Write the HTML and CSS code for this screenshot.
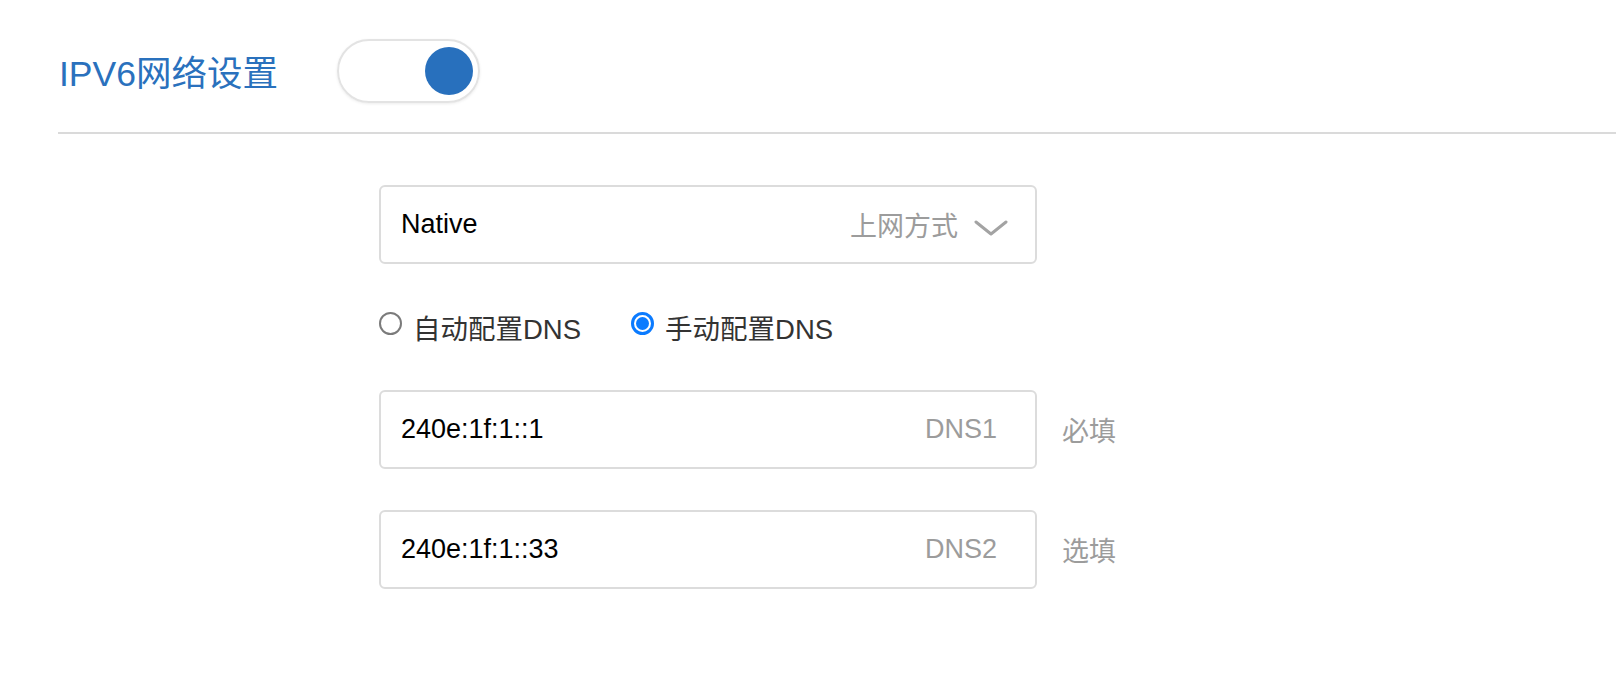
FILE: index.html
```html
<!DOCTYPE html>
<html lang="zh-CN">
<head>
<meta charset="utf-8">
<title>IPV6网络设置</title>
<link rel="stylesheet" href="styles.css">
</head>
<body>
<div class="page">
  <header class="header">
    <h1 class="title">IPV6网络设置</h1>
    <div class="toggle"><span class="knob"></span></div>
  </header>
  <main class="form">
    <div class="field select">
      <span class="value">Native</span>
      <span class="hint">上网方式</span>
      <svg class="chevron" width="34" height="18" viewBox="0 0 34 18"><polyline points="2,3 17,15 32,3" fill="none" stroke="#a3a3a3" stroke-width="3" stroke-linecap="round" stroke-linejoin="round"/></svg>
    </div>
    <div class="radios">
      <label class="radio"><span class="dot"></span><span class="rlabel">自动配置DNS</span></label>
      <label class="radio checked"><span class="dot"></span><span class="rlabel">手动配置DNS</span></label>
    </div>
    <div class="row">
      <div class="field">
        <span class="value">240e:1f:1::1</span>
        <span class="hint hint-end">DNS1</span>
      </div>
      <span class="note">必填</span>
    </div>
    <div class="row row2">
      <div class="field">
        <span class="value">240e:1f:1::33</span>
        <span class="hint hint-end">DNS2</span>
      </div>
      <span class="note">选填</span>
    </div>
  </main>
</div>
</body>
</html>
```
FILE: styles.css
```css
html, body {
  margin: 0;
  padding: 0;
  background: #ffffff;
}
body {
  font-family: "Liberation Sans", Arial, "Noto Sans CJK SC", sans-serif;
  color: #000;
}
.page {
  width: 1616px;
  height: 700px;
  overflow: hidden;
}
.header {
  margin-left: 58px;
  padding: 39px 0 29px 1px;
  display: flex;
  align-items: center;
  border-bottom: 2px solid #dadada;
}
.title {
  margin: 0;
  padding-top: 6px;
  font-size: 35.5px;
  font-weight: normal;
  color: #2a71bd;
  width: 278px;
  line-height: 40px;
}
.toggle {
  box-sizing: border-box;
  width: 143px;
  height: 64px;
  border: 2px solid #e3e3e3;
  border-radius: 32px;
  box-shadow: 0 1px 3px rgba(0, 0, 0, 0.08);
  display: flex;
  align-items: center;
  justify-content: flex-end;
  padding-right: 5px;
}
.knob {
  width: 48px;
  height: 48px;
  border-radius: 50%;
  background: #2870bd;
}
.form {
  margin-left: 379px;
  padding-top: 51px;
  display: flex;
  flex-direction: column;
}
.field {
  box-sizing: border-box;
  width: 658px;
  height: 79px;
  border: 2px solid #dcdcdc;
  border-radius: 6px;
  display: flex;
  align-items: center;
  padding: 0 38px 0 20px;
  font-size: 27px;
}
.value {
  flex: 1;
  color: #000;
}
.hint {
  color: #9c9c9c;
}
.select {
  padding-right: 27px;
}
.chevron {
  margin-left: 16px;
  margin-top: 6px;
}
.radios {
  display: flex;
  align-items: center;
  height: 40px;
  margin-top: 43px;
  margin-bottom: 43px;
  font-size: 27.5px;
  color: #333;
}
.radio {
  display: flex;
  align-items: center;
  margin-right: 50px;
}
.dot {
  box-sizing: border-box;
  width: 23px;
  height: 23px;
  border-radius: 50%;
  border: 2px solid #7b7b7b;
  margin-right: 11px;
  margin-bottom: 8px;
  background: #fff;
}
.checked .dot {
  border: 3px solid #0b7bff;
  padding: 2px;
  background: #0b7bff;
  background-clip: content-box;
}
.row {
  display: flex;
  align-items: center;
}
.row2 {
  margin-top: 41px;
}
.note {
  margin-left: 25px;
  font-size: 27px;
  color: #9c9c9c;
}
```
